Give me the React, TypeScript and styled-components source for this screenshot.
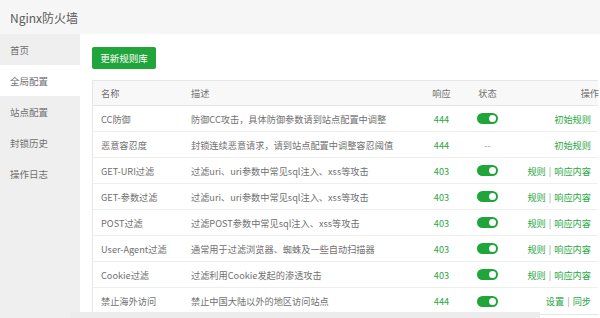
import React from "react";
import styled, { createGlobalStyle } from "styled-components";

const Global = createGlobalStyle`
  html, body { margin: 0; padding: 0; background: #fff; }
  body { font-family: "Microsoft YaHei", "Noto Sans CJK SC", "Liberation Sans", sans-serif; overflow: hidden; }
  * { box-sizing: border-box; }
`;

const Page = styled.div`
  width: 600px;
  height: 318px;
  display: flex;
  flex-direction: column;
  position: relative;
  overflow: hidden;
`;

const Header = styled.div`
  height: 34px;
  background: #f6f6f6;
  display: flex;
  align-items: center;
  padding-left: 10px;
  font-size: 12px;
  color: #5a5a5a;
`;

const Body = styled.div`
  flex: 1;
  display: flex;
  min-height: 0;
`;

const Sidebar = styled.div`
  width: 80px;
  background: #efefef;
  display: flex;
  flex-direction: column;
`;

const NavItem = styled.div<{ $active?: boolean }>`
  height: 31px;
  display: flex;
  align-items: center;
  padding-left: 10px;
  font-size: 9.5px;
  color: #707070;
  background: ${(p) => (p.$active ? "#fff" : "transparent")};
`;

const Content = styled.div`
  flex: 1;
  padding: 13px 0 0 12px;
  display: flex;
  flex-direction: column;
  align-items: flex-start;
  overflow: hidden;
`;

const Button = styled.div`
  width: 64px;
  height: 22px;
  background: #20a53a;
  border-radius: 2px;
  color: #fff;
  font-size: 9.5px;
  display: flex;
  align-items: center;
  justify-content: center;
`;

const Table = styled.div`
  margin-top: 11px;
  width: 506px;
  flex-shrink: 0;
  border-left: 1px solid #e6e6e6;
  border-top: 1px solid #e6e6e6;
  border-bottom: 1px solid #e6e6e6;
`;

const cols = "90px 241px 35px 57px 83px";

const HeadRow = styled.div`
  display: grid;
  grid-template-columns: ${cols};
  height: 25px;
  background: #f8f8f8;
  border-bottom: 1px solid #e6e6e6;
  font-size: 9.2px;
  color: #707070;
`;

const Row = styled.div`
  display: grid;
  grid-template-columns: ${cols};
  height: 26px;
  border-bottom: 1px solid #eee;
  font-size: 9.2px;
  color: #707070;
  &:last-child { border-bottom: none; }
`;

const Cell = styled.div<{ $align?: "left" | "center" | "right"; $pr?: number }>`
  display: flex;
  align-items: center;
  padding-left: ${(p) => (p.$align === "left" || !p.$align ? "8px" : "0")};
  padding-right: ${(p) => (p.$align === "right" ? `${p.$pr ?? 8}px` : "0")};
  justify-content: ${(p) =>
    p.$align === "center" ? "center" : p.$align === "right" ? "flex-end" : "flex-start"};
  white-space: nowrap;
`;

const Green = styled.span`
  color: #2aa844;
`;

const Sep = styled.span`
  color: #999;
  margin: 0 3px;
`;

const Toggle = styled.div`
  width: 21px;
  height: 11px;
  border-radius: 6px;
  background: #20a53a;
  position: relative;
  &::after {
    content: "";
    position: absolute;
    right: 2px;
    top: 2px;
    width: 7px;
    height: 7px;
    border-radius: 50%;
    background: #fff;
  }
`;

const Dash = styled.span`
  color: #999;
`;

const ScrollThumb = styled.div`
  position: absolute;
  left: 70px;
  bottom: 0;
  width: 470px;
  height: 6px;
  background: #ececec;
`;

type RowData = {
  name: string;
  desc: string;
  code: string;
  on: boolean | null;
  ops: string[];
};

const rows: RowData[] = [
  { name: "CC防御", desc: "防御CC攻击，具体防御参数请到站点配置中调整", code: "444", on: true, ops: ["初始规则"] },
  { name: "恶意容忍度", desc: "封锁连续恶意请求，请到站点配置中调整容忍阈值", code: "444", on: null, ops: ["初始规则"] },
  { name: "GET-URI过滤", desc: "过滤uri、uri参数中常见sql注入、xss等攻击", code: "403", on: true, ops: ["规则", "响应内容"] },
  { name: "GET-参数过滤", desc: "过滤uri、uri参数中常见sql注入、xss等攻击", code: "403", on: true, ops: ["规则", "响应内容"] },
  { name: "POST过滤", desc: "过滤POST参数中常见sql注入、xss等攻击", code: "403", on: true, ops: ["规则", "响应内容"] },
  { name: "User-Agent过滤", desc: "通常用于过滤浏览器、蜘蛛及一些自动扫描器", code: "403", on: true, ops: ["规则", "响应内容"] },
  { name: "Cookie过滤", desc: "过滤利用Cookie发起的渗透攻击", code: "403", on: true, ops: ["规则", "响应内容"] },
  { name: "禁止海外访问", desc: "禁止中国大陆以外的地区访问站点", code: "444", on: true, ops: ["设置", "同步"] },
];

const navs = ["首页", "全局配置", "站点配置", "封锁历史", "操作日志"];

export default function App() {
  return (
    <Page>
      <Global />
      <Header>Nginx防火墙</Header>
      <Body>
        <Sidebar>
          {navs.map((n) => (
            <NavItem key={n} $active={n === "全局配置"}>
              {n}
            </NavItem>
          ))}
        </Sidebar>
        <Content>
          <Button>更新规则库</Button>
          <Table>
            <HeadRow>
              <Cell>名称</Cell>
              <Cell>描述</Cell>
              <Cell $align="center">响应</Cell>
              <Cell $align="center">状态</Cell>
              <Cell $align="right" $pr={0}>操作</Cell>
            </HeadRow>
            {rows.map((r) => (
              <Row key={r.name}>
                <Cell>{r.name}</Cell>
                <Cell>{r.desc}</Cell>
                <Cell $align="center">
                  <Green>{r.code}</Green>
                </Cell>
                <Cell $align="center">{r.on ? <Toggle /> : <Dash>--</Dash>}</Cell>
                <Cell $align="right">
                  {r.ops.map((o, i) => (
                    <React.Fragment key={o}>
                      {i > 0 && <Sep>|</Sep>}
                      <Green>{o}</Green>
                    </React.Fragment>
                  ))}
                </Cell>
              </Row>
            ))}
          </Table>
        </Content>
      </Body>
      <ScrollThumb />
    </Page>
  );
}
